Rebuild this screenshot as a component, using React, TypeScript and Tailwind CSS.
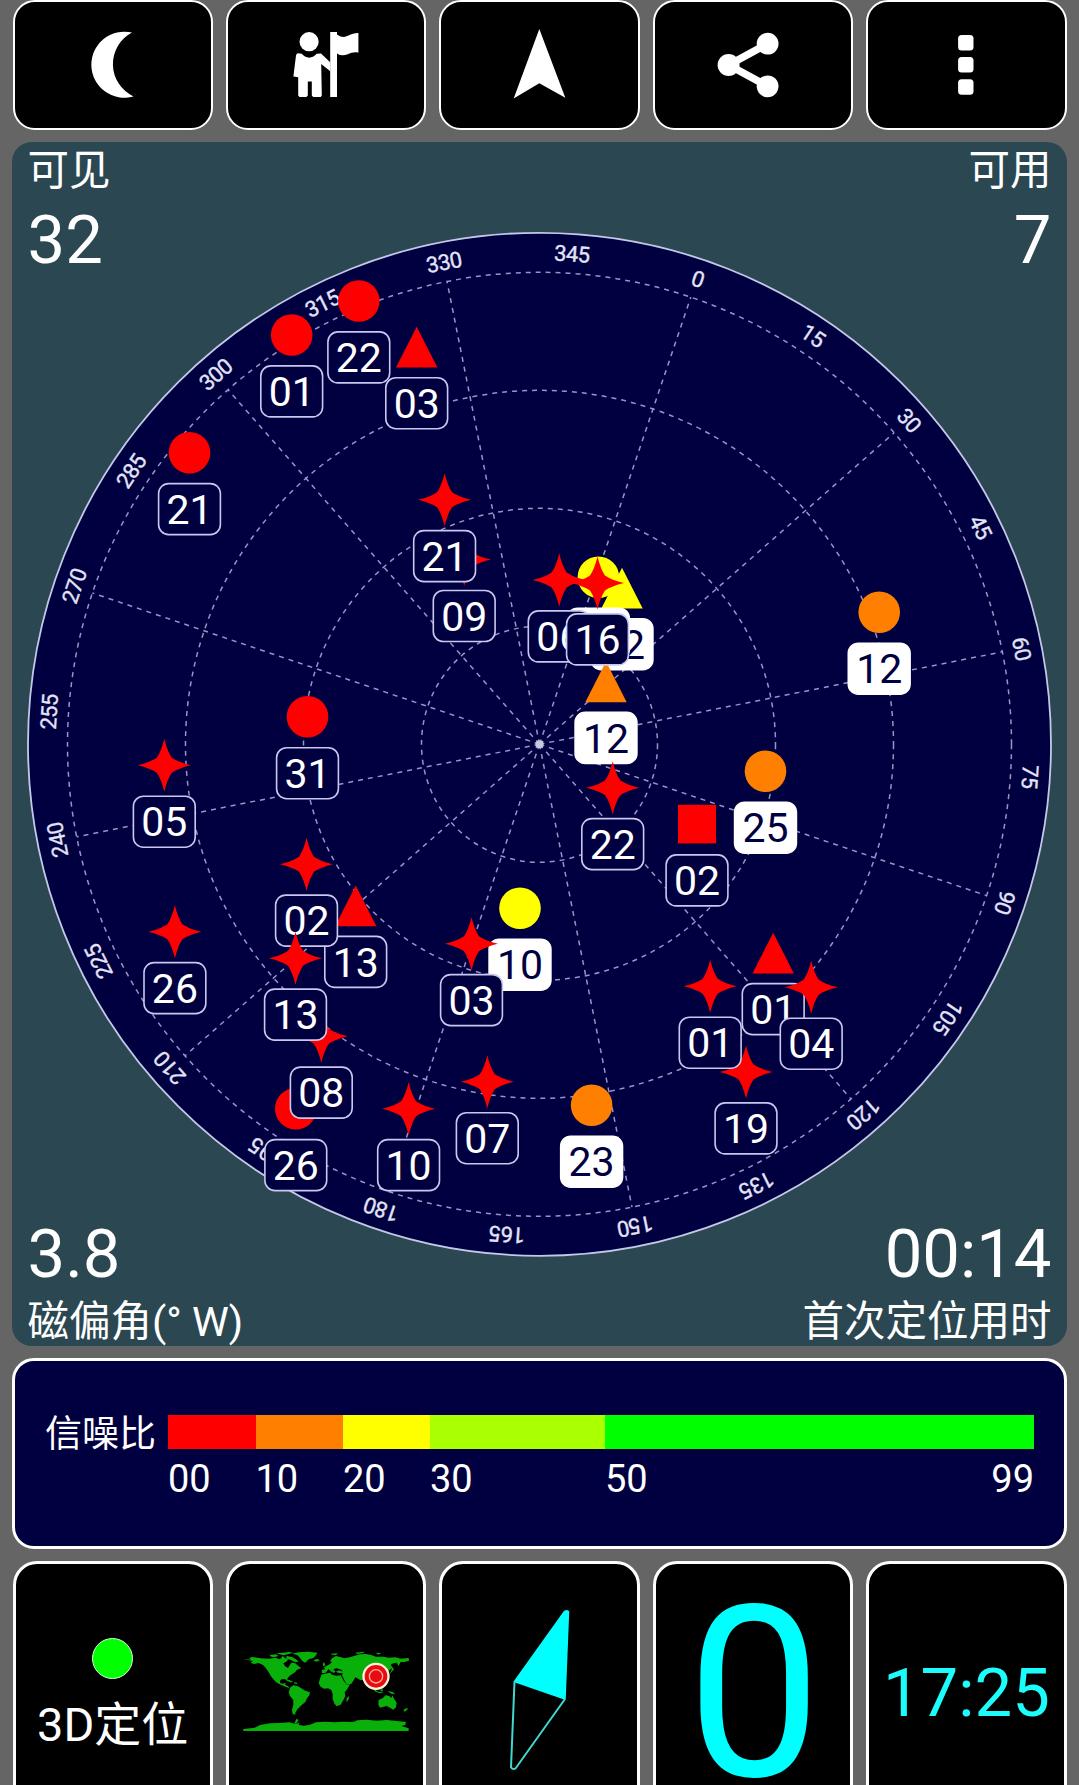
import type { ReactNode } from "react";

type Shape = "circle" | "triangle" | "square" | "star";

interface Satellite {
  id: string;
  shape: Shape;
  x: number;
  y: number;
  color?: string;
  used?: boolean;
}

const RED = "#ff0000";
const ORANGE = "#ff8000";
const YELLOW = "#ffff00";

const CX = 539.5;
const CY = 744.3;
const RING = 118;
const HEADING = 18.7;

// Painted in order, later ones cover earlier ones.
const SATELLITES: Satellite[] = [
  { id: "01", shape: "circle", x: 291.7, y: 335 },
  { id: "22", shape: "circle", x: 358.8, y: 301 },
  { id: "21", shape: "circle", x: 189.5, y: 452.7 },
  { id: "31", shape: "circle", x: 307.5, y: 716.8 },
  { id: "26", shape: "circle", x: 295.8, y: 1108.7 },
  { id: "10", shape: "circle", x: 520, y: 908.3, color: YELLOW, used: true },
  { id: "12", shape: "circle", x: 879.2, y: 612.3, color: ORANGE, used: true },
  { id: "23", shape: "circle", x: 591.6, y: 1105.3, color: ORANGE, used: true },
  { id: "02", shape: "triangle", x: 622, y: 587.8, color: YELLOW, used: true },
  { id: "29", shape: "circle", x: 598.4, y: 577.3, color: YELLOW, used: true },
  { id: "03", shape: "triangle", x: 416.7, y: 346.8 },
  { id: "13", shape: "triangle", x: 355.7, y: 905.5 },
  { id: "01", shape: "triangle", x: 773.2, y: 952.7 },
  { id: "12", shape: "triangle", x: 606, y: 681.5, color: ORANGE, used: true },
  { id: "02", shape: "square", x: 697, y: 824 },
  { id: "25", shape: "circle", x: 765.5, y: 771.3, color: ORANGE, used: true },
  { id: "19", shape: "star", x: 746, y: 1072 },
  { id: "01", shape: "star", x: 710.2, y: 986.3 },
  { id: "04", shape: "star", x: 811.2, y: 987.3 },
  { id: "03", shape: "star", x: 471.5, y: 943.7 },
  { id: "05", shape: "star", x: 164.3, y: 765.3 },
  { id: "22", shape: "star", x: 612.7, y: 787.7 },
  { id: "06", shape: "star", x: 559.2, y: 580 },
  { id: "16", shape: "star", x: 597.5, y: 583 },
  { id: "09", shape: "star", x: 464.2, y: 559.6 },
  { id: "21", shape: "star", x: 444.6, y: 499.7 },
  { id: "26", shape: "star", x: 174.9, y: 931.7 },
  { id: "02", shape: "star", x: 306.5, y: 864.2 },
  { id: "08", shape: "star", x: 321.3, y: 1036.2 },
  { id: "13", shape: "star", x: 295.5, y: 958.2 },
  { id: "10", shape: "star", x: 408.6, y: 1108.7 },
  { id: "07", shape: "star", x: 487.3, y: 1081.8 },
];

const SNR = [
  { label: "00", className: "w-[87.5px] bg-[#ff0000]" },
  { label: "10", className: "w-[87.5px] bg-[#ff8000]" },
  { label: "20", className: "w-[87px] bg-[#ffff00]" },
  { label: "30", className: "w-[175px] bg-[#aaff00]" },
  { label: "50", className: "w-[429px] bg-[#00ff00]" },
];

const Marker = ({ shape, color }: { shape: Shape; color: string }) => {
  if (shape === "circle") return <circle r={20.8} fill={color} />;
  if (shape === "square") return <rect x={-19} y={-19.2} width={38} height={38.6} fill={color} />;
  if (shape === "triangle") return <path d="M0 -20L20.7 20.7H-20.7Z" fill={color} />;
  return (
    <path
      d="M0 -26.5Q3 -14 7.5 -7.5Q14 -3 26.5 0Q14 3 7.5 7.5Q3 14 0 26.5Q-3 14 -7.5 7.5Q-14 3 -26.5 0Q-14 -3 -7.5 -7.5Q-3 -14 0 -26.5Z"
      fill={color}
    />
  );
};

const SatelliteMark = ({ sat }: { sat: Satellite }) => (
  <g transform={`translate(${sat.x} ${sat.y})`}>
    <Marker shape={sat.shape} color={sat.color ?? RED} />
    <rect
      x={-30.9}
      y={30.9}
      width={61.8}
      height={51}
      rx={10}
      fill={sat.used ? "#ffffff" : "#000040"}
      stroke={sat.used ? "#ffffff" : "#c8c8f0"}
      strokeWidth={1.6}
    />
    <text y={71} fontSize={41} textAnchor="middle" fill={sat.used ? "#000040" : "#ffffff"}>
      {sat.id}
    </text>
  </g>
);

const SkyPlot = () => {
  const spokes = Array.from({ length: 12 }, (_, i) => i * 30);
  const labels = Array.from({ length: 24 }, (_, i) => i * 15);

  return (
    <svg
      viewBox="12 142 1055 1204"
      className="absolute inset-0 h-full w-full font-['Roboto',sans-serif]"
    >
      <circle cx={CX} cy={CY} r={511.5} fill="#000040" stroke="#c4c8e8" strokeWidth={1.8} />
      <g fill="none" stroke="#9696c4" strokeWidth={1.5} strokeDasharray="5 5">
        {[1, 2, 3, 4].map((n) => (
          <circle key={n} cx={CX} cy={CY} r={n * RING} />
        ))}
        {spokes.map((deg) => (
          <path
            key={deg}
            d={`M${CX} ${CY}V${CY - RING * 4}`}
            transform={`rotate(${deg + HEADING} ${CX} ${CY})`}
          />
        ))}
      </g>
      <circle cx={CX} cy={CY} r={4} fill="#c8c8dc" />
      <g
        fill="#e4e4f8"
        stroke="#e4e4f8"
        strokeWidth={0.35}
        fontSize={22}
        letterSpacing={-0.6}
        textAnchor="middle"
      >
        {labels.map((deg) => (
          <text
            key={deg}
            x={CX + 0.7}
            y={CY - 483.7}
            transform={`rotate(${deg + HEADING} ${CX} ${CY})`}
          >
            {deg}
          </text>
        ))}
      </g>
      {SATELLITES.map((sat) => (
        <SatelliteMark key={`${sat.shape}-${sat.id}-${sat.x}`} sat={sat} />
      ))}
    </svg>
  );
};

const ToolButton = ({ children }: { children: ReactNode }) => (
  <button className="flex h-[130px] flex-1 items-center justify-center rounded-[22px] border-[2.5px] border-white bg-black">
    {children}
  </button>
);

const Tile = ({ children }: { children: ReactNode }) => (
  <div className="flex h-[280px] flex-1 flex-col items-center rounded-[24px] border-[3px] border-white bg-black">
    {children}
  </div>
);

const MoonIcon = () => (
  <svg viewBox="14.5 2 196 126" className="h-full w-full" fill="#fff">
    <path d="M131.3 32.6A33 33 0 1 0 132.8 96.4A35.6 35.6 0 0 1 131.3 32.6Z" />
  </svg>
);

const GuideIcon = () => (
  <svg viewBox="228 2 196 126" className="h-full w-full" fill="#fff">
    <circle cx="308.9" cy="41.7" r="9.6" />
    <path d="M298 53.3L301.5 53.8Q309 61.5 316.5 53.8L320.8 53.4L330 62.3V71.2L321 64L321.6 95.5L320.5 96.9H313L311.6 95.5V81.6H307.6V95.5L306.2 96.9H299.2L298 95.5V77.3L293.2 76.6L295.8 55.5Q296.2 53.3 298 53.3Z" />
    <path d="M330 32H336.8V34.6Q341.5 38.5 347 36Q353.5 32.8 358.2 33V52.4Q352.5 51.4 347.5 54.2Q341.5 56.8 336.8 53.4V97H330Z" />
  </svg>
);

const NavIcon = () => (
  <svg viewBox="441.5 2 196 126" className="h-full w-full" fill="#fff">
    <path d="M539.6 29L565.6 97.8L539.6 83.3L514 98.5Z" />
  </svg>
);

const ShareIcon = () => (
  <svg viewBox="655 2 196 126" className="h-full w-full" fill="#fff">
    <path d="M767.4 43.7L728.4 65L767.4 86.3" fill="none" stroke="#fff" strokeWidth="7.5" />
    <circle cx="728.4" cy="65" r="11" />
    <circle cx="767.4" cy="43.7" r="10.9" />
    <circle cx="767.4" cy="86.3" r="10.9" />
  </svg>
);

const MoreIcon = () => (
  <svg viewBox="868.5 2 196 126" className="h-full w-full" fill="#fff">
    <rect x="958.4" y="35" width="15.4" height="15.6" rx="3.5" />
    <rect x="958.4" y="57" width="15.4" height="15.6" rx="3.5" />
    <rect x="958.4" y="79.2" width="15.4" height="15.6" rx="3.5" />
  </svg>
);

const WorldMap = () => (
  <svg viewBox="3 0 570 330" className="mt-[76px] h-[110px] w-[190px] shrink-0" fill="#0ab00a">
    <path d="M40 57L62 59L58 54L66 51L92 55L118 56L136 53L150 58L158 48L166 55L175 58L168 66L160 70L165 79L174 84L180 74L184 68L196 70L206 79L214 84L200 90L196 96L186 103L178 108L172 116L174 124L166 118L156 117L150 122L150 129L160 131L166 128L166 135L174 138L178 144L168 141L154 135L142 129L134 122L124 110L117 98L108 85L100 76L86 69L72 72L62 68L68 63Z" />
    <path d="M120 45L138 43L146 48L132 52L120 49ZM138 40L160 38L176 36L190 38L174 43L160 46ZM170 48L186 51L198 58L206 65L196 67L182 60L168 55Z" />
    <path d="M186 41L206 37L236 35L262 38L258 46L250 54L236 58L226 68L218 64L210 54L202 45ZM250 60L262 57L270 61L258 65Z" />
    <path d="M166 119L178 120L190 126L181 127ZM192 127L202 128L200 132L192 130Z" />
    <path d="M180 143L190 136L204 139L216 146L226 152L240 157L238 166L230 176L226 186L216 194L208 202L202 208L196 218L196 224L188 222L186 210L190 194L190 180L180 168L176 158Z" />
    <path d="M200 236L206 240L200 249L192 253L196 243Z" />
    <path d="M274 104L284 101L300 98L306 104L318 107L332 106L340 121L350 134L360 133L352 147L344 157L346 168L340 180L332 194L320 199L314 192L308 178L308 162L304 150L294 145L282 146L272 140L266 130L270 116ZM350 174L358 168L355 180L349 186Z" />
    <path d="M275 99L276 89L286 88L282 82L290 77L299 73L306 66L300 64L306 55L318 48L330 51L344 55L362 51L374 47L390 43L408 42L424 45L438 50L460 50L476 53L496 52L512 56L536 54L537 62L522 66L512 66L506 78L500 68L490 70L482 74L488 83L478 90L474 103L466 108L472 118L462 130L450 134L454 146L444 145L438 131L430 122L422 127L416 139L408 128L402 119L392 121L376 112L372 119L364 131L350 134L342 118L336 106L338 100L322 98L318 92L312 99L304 95L296 88L286 99Z" />
    <path d="M304 96L310 89L318 94L328 91L338 95L334 89L320 85L314 86Z" fill="#000" />
    <path d="M278 72L282 66L286 76L280 79ZM302 41L324 40L318 45L306 44ZM376 38L404 35L400 39L382 42ZM438 38L454 40L444 44Z" />
    <path d="M486 80L492 88L482 99L478 101L484 92ZM428 143L442 154L450 156L462 158L450 160L434 154ZM450 150L460 147L456 156ZM472 153L488 156L496 163L484 161Z" />
    <path d="M446 180L460 173L466 166L478 168L484 174L487 166L492 176L500 188L498 202L490 209L480 203L470 198L450 203L445 194ZM520 210L530 204L534 207L524 215Z" />
    <path d="M40 267L74 263L90 255L120 250L150 249L178 247L196 252L208 248L206 255L222 257L240 254L258 247L286 245L314 247L340 245L370 246L382 241L410 239L440 242L470 240L500 243L528 246L526 254L514 258L536 265V273H40Z" />
    <circle cx="438" cy="109" r="41" fill="#fff0dc" />
    <circle cx="438" cy="109" r="34" fill="#e80c10" />
    <circle cx="438" cy="109" r="20" fill="none" stroke="#ffb0a0" strokeWidth="4" />
  </svg>
);

const Compass = () => (
  <svg viewBox="442 1564 195 221" className="h-[221px] w-[195px] shrink-0">
    <path
      d="M564.5 1611.5Q566.5 1610 568.5 1611.5L565 1699L514.5 1681.5Z"
      fill="#00ffff"
      stroke="#00ffff"
      strokeWidth="1.5"
      strokeLinejoin="round"
    />
    <path
      d="M514.5 1681.5L511 1767.5Q513 1770 515.5 1768.5L565 1699"
      fill="none"
      stroke="#40d8d0"
      strokeWidth="2"
      strokeLinejoin="round"
    />
  </svg>
);

const Readout = ({ children }: { children: ReactNode }) => (
  <span className="text-[67px] leading-[68px] font-normal">{children}</span>
);

const Caption = ({ children }: { children: ReactNode }) => (
  <span className="text-[41.5px] leading-[48px] whitespace-nowrap">{children}</span>
);

export default function App() {
  return (
    <div className="flex h-[1785px] w-[1079px] flex-col gap-3 overflow-hidden bg-[#656565] px-3 font-['Roboto','Noto_Sans_CJK_SC',sans-serif] text-white">
      <div className="flex h-[130px] shrink-0 gap-[13px] px-[0.5px]">
        <ToolButton><MoonIcon /></ToolButton>
        <ToolButton><GuideIcon /></ToolButton>
        <ToolButton><NavIcon /></ToolButton>
        <ToolButton><ShareIcon /></ToolButton>
        <ToolButton><MoreIcon /></ToolButton>
      </div>

      <section className="relative flex h-[1204px] shrink-0 flex-col justify-between overflow-hidden rounded-[20px] bg-[#2b4751] px-[15.5px]">
        <SkyPlot />
        <div className="relative flex justify-between pt-[5px]">
          <div className="flex flex-col gap-[11px]">
            <Caption>可见</Caption>
            <Readout>32</Readout>
          </div>
          <div className="flex flex-col items-end gap-[11px]">
            <Caption>可用</Caption>
            <Readout>7</Readout>
          </div>
        </div>
        <div className="relative flex justify-between">
          <div className="flex flex-col gap-[10px]">
            <Readout>3.8</Readout>
            <Caption>磁偏角(° W)</Caption>
          </div>
          <div className="flex flex-col items-end gap-[10px]">
            <Readout>00:14</Readout>
            <Caption>首次定位用时</Caption>
          </div>
        </div>
      </section>

      <section className="flex h-[191px] shrink-0 rounded-[22px] border-[3px] border-white bg-[#000040] pt-[54px] pl-[30px]">
        <span className="w-[123px] pt-[2px] text-[37px] leading-[36px] whitespace-nowrap">信噪比</span>
        <div>
          <div className="flex">
            {SNR.map((band) => (
              <div key={band.label} className={band.className + " h-[34px]"} />
            ))}
          </div>
          <div className="flex pt-[8px] text-[38px] leading-[44px]">
            <span className="w-[87.5px]">00</span>
            <span className="w-[87.5px]">10</span>
            <span className="w-[87px]">20</span>
            <span className="w-[175px]">30</span>
            <span className="flex w-[429px] justify-between">
              <span>50</span>
              <span>99</span>
            </span>
          </div>
        </div>
      </section>

      <div className="flex shrink-0 gap-[13px] px-[0.5px]">
        <Tile>
          <div className="mt-[74px] size-[41px] rounded-full border border-[#d8ffd8] bg-[#00ff00]" />
          <span className="mt-[18px] text-[47px] leading-[56px] whitespace-nowrap">3D定位</span>
        </Tile>
        <Tile><WorldMap /></Tile>
        <Tile><Compass /></Tile>
        <Tile>
          <span className="mt-[17px] pl-[2px] text-[239px] leading-[226px] text-[#00ffff]">0</span>
        </Tile>
        <Tile>
          <span className="mt-[91px] text-[67px] leading-[76px] text-[#1dfcfc]">17:25</span>
        </Tile>
      </div>
    </div>
  );
}
